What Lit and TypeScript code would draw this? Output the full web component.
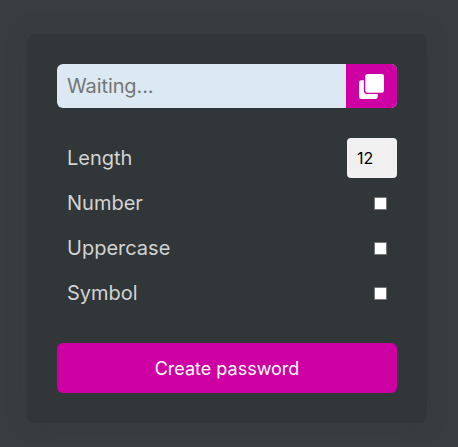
import { LitElement, html, css } from "lit";
import { customElement } from "lit/decorators.js";

@customElement("app-root")
export class AppRoot extends LitElement {
  static styles = css`
    :host {
      display: flex;
      justify-content: center;
      box-sizing: border-box;
      height: 100vh;
      padding: 34px 31px 0 27px;
      overflow: hidden;
      background: #393d3f;
      color: #d3d3d3;
      font: 20px/24px Inter, sans-serif;
    }
    * {
      box-sizing: border-box;
    }
    .card {
      width: 400px;
      height: 389px;
      padding: 30px;
      border-radius: 8px;
      background: #313638;
      box-shadow: 0 0 20px rgba(49, 54, 56, 0.4);
    }
    .result {
      display: flex;
      height: 44px;
      margin-bottom: 30px;
      border-radius: 6px;
      overflow: hidden;
      background: #dce9f2;
    }
    .output {
      flex: 1;
      min-width: 0;
      padding: 0 10px;
      border: 0;
      outline: 0;
      background: transparent;
      color: #313638;
      font: inherit;
      letter-spacing: -0.1px;
    }
    .output::placeholder {
      color: #757575;
    }
    .copy {
      display: flex;
      align-items: center;
      justify-content: center;
      width: 51px;
      padding: 0;
      border: 0;
      background: #cf00a3;
      color: #fff;
    }
    .copy svg {
      width: 25px;
      height: 25px;
    }
    .row {
      display: flex;
      align-items: center;
      justify-content: space-between;
      height: 45px;
      padding: 0 10px;
    }
    .row.first {
      height: 40px;
      margin-bottom: 2px;
      padding-right: 0;
    }
    .length {
      width: 50px;
      height: 40px;
      padding: 0 10px;
      border: 0;
      border-radius: 4px;
      background: #f0f0f0;
      color: #000;
      font: 16px Inter, sans-serif;
    }
    .check {
      appearance: none;
      width: 13px;
      height: 13px;
      margin: 2px 0 0;
      border: 1px solid #767676;
      border-radius: 1px;
      background: #fff;
    }
    .check:checked {
      background: #cf00a3;
    }
    .create {
      display: block;
      width: 100%;
      height: 50px;
      margin-top: 28px;
      padding: 0;
      border: 0;
      border-radius: 6px;
      background: #cf00a3;
      color: #fff;
      font: 18px Inter, sans-serif;
    }
  `;

  render() {
    return html`
      <div class="card">
        <div class="result">
          <input class="output" type="text" placeholder="Waiting..." readonly />
          <button class="copy" aria-label="Copy">
            <svg viewBox="0 0 512 512" fill="currentColor">
              <path d="M176 0H464a48 48 0 0 1 48 48V336a48 48 0 0 1-48 48H176a48 48 0 0 1-48-48V48a48 48 0 0 1 48-48Z" />
              <path d="M48 128H100V336a76 76 0 0 0 76 76H384V464a48 48 0 0 1-48 48H48a48 48 0 0 1-48-48V176a48 48 0 0 1 48-48Z" />
            </svg>
          </button>
        </div>
        <label class="row first">
          <span>Length</span>
          <input class="length" type="text" inputmode="numeric" value="12" />
        </label>
        ${["Number", "Uppercase", "Symbol"].map(
          (name) => html`
            <label class="row">
              <span>${name}</span>
              <input class="check" type="checkbox" />
            </label>
          `
        )}
        <button class="create">Create password</button>
      </div>
    `;
  }
}
